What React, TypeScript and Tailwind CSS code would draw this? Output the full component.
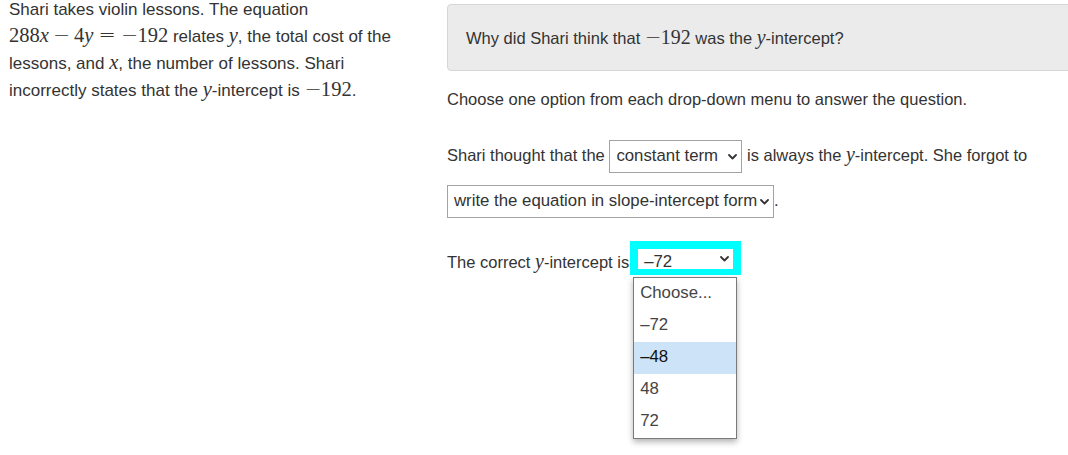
import React from "react";

const serif = "font-['Liberation_Serif','DejaVu_Serif',serif] text-[1.21em] leading-none";
const opfont = "font-['DejaVu_Sans',sans-serif] text-[1.21em] font-light leading-none";

function N({ children }: { children: React.ReactNode }) {
  return <span className={serif}>{children}</span>;
}
function V({ children }: { children: React.ReactNode }) {
  return <span className={serif + " italic"}>{children}</span>;
}
function Bin({ children }: { children: React.ReactNode }) {
  return <span className={opfont + " mx-[0.19em]"}>{children}</span>;
}
function Rel({ children }: { children: React.ReactNode }) {
  return <span className={opfont + " mx-[0.25em]"}>{children}</span>;
}
function Neg() {
  return <span className={opfont + " -mr-[0.04em]"}>−</span>;
}

function Chevron() {
  return (
    <svg width="9" height="6" viewBox="0 0 9 6" className="shrink-0">
      <path d="M1 1 L4.5 4.5 L8 1" fill="none" stroke="#333" strokeWidth="1.8" strokeLinecap="round" strokeLinejoin="round" />
    </svg>
  );
}

function Select({ text, width }: { text: string; width: string }) {
  return (
    <span
      className={`inline-flex items-center justify-between align-middle h-[33px] border border-[#a3a3a3] bg-white pl-[6px] pr-[4px] leading-none text-[16.8px] ${width}`}
    >
      <span className="whitespace-nowrap">{text}</span>
      <Chevron />
    </span>
  );
}

export default function App() {
  const opts = ["Choose...", "–72", "–48", "48", "72"];
  return (
    <div className="w-[1068px] h-[455px] overflow-hidden bg-white flex font-['Liberation_Sans',Arial,sans-serif] text-[#333]">
      <div className="w-[447px] shrink-0 pl-[9px] pr-[30px] text-[17px] leading-[27px] -mt-[4px]">
        Shari takes violin lessons. The equation <N>288</N>
        <V>x</V>
        <Bin>−</Bin>
        <N>4</N>
        <V>y</V>
        <Rel>=</Rel>
        <Neg />
        <N>192</N> relates <V>y</V>, the total cost of the lessons, and <V>x</V>, the number of lessons. Shari
        incorrectly states that the <V>y</V>-intercept is <Neg />
        <N>192</N>.
      </div>
      <div className="w-[640px] shrink-0 text-[16.5px]">
        <div className="mt-[4px] h-[67px] bg-[#ebebeb] border border-[#d6d6d6] rounded-[4px] flex items-center pl-[18px] pt-[2px]">
          <span>
            Why did Shari think that <Neg />
            <N>192</N> was the <V>y</V>-intercept?
          </span>
        </div>
        <p className="mt-[16px] leading-[24px]">Choose one option from each drop-down menu to answer the question.</p>
        <div className="mt-[22px] leading-[45px]">
          Shari thought that the <Select text="constant term" width="w-[133px]" /> is always the <V>y</V>-intercept. She
          forgot to
          <br />
          <Select text="write the equation in slope-intercept form" width="w-[327px]" />.
        </div>
        <div className="mt-[17px] leading-[45px] flex items-center">
          <span>
            The correct <V>y</V>-intercept is
          </span>
          <span className="relative ml-[1px] mb-[10px] inline-block">
            <span className="flex items-center justify-between w-[111px] h-[34px] border-[8px] border-b-[6px] border-[#00ffff] bg-white pl-[6px] pr-[4px] leading-none text-[16.8px]">
              <span className="mt-[7px]">–72</span>
              <Chevron />
            </span>
            <div className="absolute left-[3px] top-[36px] w-[104px] bg-white border border-[#7a7a7a] shadow-[0_3px_6px_rgba(0,0,0,0.3)] text-[16.8px] leading-none z-10">
              {opts.map((o) => (
                <div
                  key={o}
                  className={`h-[32px] flex items-center pl-[6px] ${o === "–48" ? "bg-[#cde3f7] text-[#111]" : "text-[#444]"}`}
                >
                  {o}
                </div>
              ))}
            </div>
          </span>
        </div>
      </div>
    </div>
  );
}
